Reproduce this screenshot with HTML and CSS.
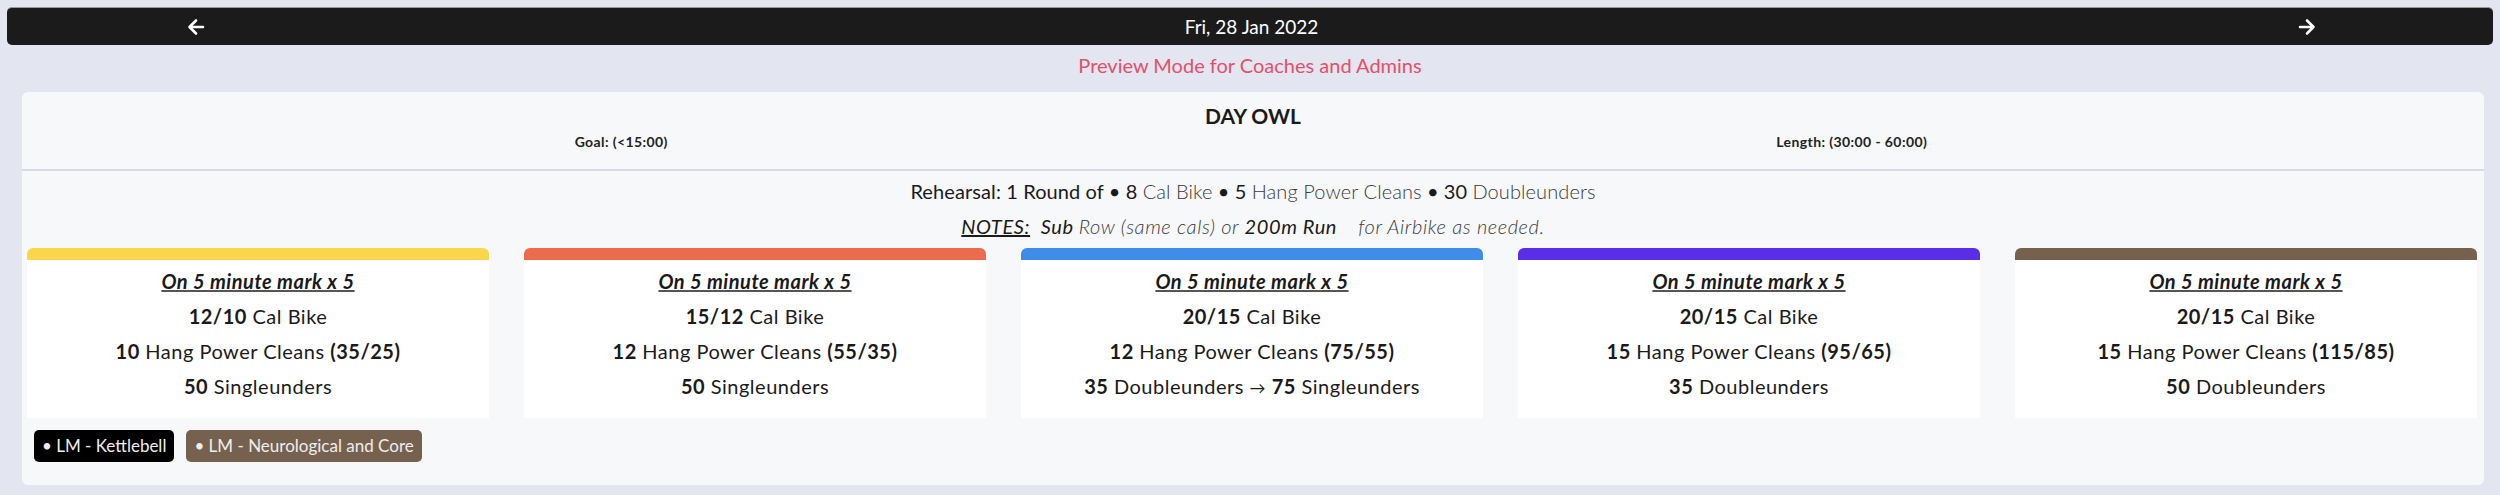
FILE: index.html
```html
<!DOCTYPE html>
<html lang="en">
<head>
<meta charset="utf-8">
<title>Day Owl</title>
<link rel="stylesheet" href="styles.css">
</head>
<body>
<div class="datebar">
  <span class="nav"><svg width="18" height="18" viewBox="0 0 18 18"><path d="M16 9H3M9 2.5L2.5 9 9 15.5" fill="none" stroke="#fff" stroke-width="2.6" stroke-linecap="round" stroke-linejoin="round"/></svg></span>
  <span class="date">Fri, 28 Jan 2022</span>
  <span class="nav"><svg width="18" height="18" viewBox="0 0 18 18"><path d="M2 9h13M9 2.5L15.5 9 9 15.5" fill="none" stroke="#fff" stroke-width="2.6" stroke-linecap="round" stroke-linejoin="round"/></svg></span>
</div>
<div class="preview">Preview Mode for Coaches and Admins</div>
<div class="panel">
  <div class="head">
    <div class="title">DAY OWL</div>
    <div class="meta"><div>Goal: (&lt;15:00)</div><div>Length: (30:00 - 60:00)</div></div>
  </div>
  <div class="body">
    <p class="rehearsal">Rehearsal: 1 Round of • 8 <span class="lt">Cal Bike</span> • 5 <span class="lt">Hang Power Cleans</span> • 30 <span class="lt">Doubleunders</span></p>
    <p class="notes"><span class="ul">NOTES:</span>&nbsp; Sub <span class="lt">Row (same cals) or</span> 200m Run&nbsp;&nbsp;&nbsp; <span class="lt">for Airbike as needed.</span></p>
    <div class="cards">
      <div class="card yellow">
        <p class="ct">On 5 minute mark x 5</p>
        <p><b>12/10</b> Cal Bike</p>
        <p><b>10</b> Hang Power Cleans <b>(35/25)</b></p>
        <p><b>50</b> Singleunders</p>
      </div>
      <div class="card orange">
        <p class="ct">On 5 minute mark x 5</p>
        <p><b>15/12</b> Cal Bike</p>
        <p><b>12</b> Hang Power Cleans <b>(55/35)</b></p>
        <p><b>50</b> Singleunders</p>
      </div>
      <div class="card blue">
        <p class="ct">On 5 minute mark x 5</p>
        <p><b>20/15</b> Cal Bike</p>
        <p><b>12</b> Hang Power Cleans <b>(75/55)</b></p>
        <p><b>35</b> Doubleunders <span class="arr">&#8594;</span> <b>75</b> Singleunders</p>
      </div>
      <div class="card purple">
        <p class="ct">On 5 minute mark x 5</p>
        <p><b>20/15</b> Cal Bike</p>
        <p><b>15</b> Hang Power Cleans <b>(95/65)</b></p>
        <p><b>35</b> Doubleunders</p>
      </div>
      <div class="card brown">
        <p class="ct">On 5 minute mark x 5</p>
        <p><b>20/15</b> Cal Bike</p>
        <p><b>15</b> Hang Power Cleans <b>(115/85)</b></p>
        <p><b>50</b> Doubleunders</p>
      </div>
    </div>
    <div class="tags">
      <span class="tag tag-black">• LM - Kettlebell</span>
      <span class="tag tag-brown">• LM - Neurological and Core</span>
    </div>
  </div>
</div>
</body>
</html>
```
FILE: styles.css
```css
html, body {
  margin: 0;
  padding: 0;
}
body {
  background: #e3e5f0;
  padding: 7px 7px 0 7px;
  font-family: Lato, "Noto Sans", sans-serif;
  color: #1a1a1a;
}
.datebar {
  height: 38px;
  box-sizing: border-box;
  background: #1b1b1b;
  border-top: 1px solid #9a9a9a;
  border-radius: 5px;
  display: flex;
  align-items: center;
  justify-content: space-between;
  padding: 0 177px 0 180px;
}
.nav {
  display: flex;
  width: 18px;
  height: 18px;
}
.date {
  color: #ffffff;
  font-size: 19px;
  line-height: 36px;
}
.preview {
  text-align: center;
  color: #e2506a;
  font-size: 20px;
  line-height: 28px;
  padding-top: 6px;
}
.panel {
  margin: 13px 9px 0 15px;
  background: #f7f8fa;
  border-radius: 6px;
  padding-bottom: 23px;
}
.head {
  padding: 12px 0 19px;
  border-bottom: 2px solid #d7d8e8;
  text-align: center;
}
.title {
  font-weight: 700;
  font-size: 21px;
  line-height: 24px;
}
.meta {
  display: grid;
  grid-template-columns: 1fr 1fr;
  margin: 6px 17px 0 -16px;
  font-size: 14px;
  letter-spacing: 0.4px;
  font-weight: 700;
  line-height: 16px;
  color: #222;
}
.body p {
  margin: 0;
}
.rehearsal,
.notes {
  text-align: center;
  font-size: 20px;
  line-height: 28px;
  color: #1a1a1a;
}
.rehearsal {
  margin-top: 6px !important;
  letter-spacing: 0.1px;
}
.notes {
  margin-top: 7px !important;
  font-style: italic;
  letter-spacing: 0.6px;
}
.lt {
  font-weight: 300;
  color: #3a3a3a;
}
.ul {
  text-decoration: underline;
  font-weight: 400;
}
.cards {
  display: grid;
  grid-template-columns: repeat(5, 1fr);
  column-gap: 35px;
  padding: 0 7px 0 5px;
  margin-top: 8px;
}
.card {
  background: #ffffff;
  border-top: 12px solid #f9d64a;
  border-radius: 6px 6px 0 0;
  padding: 4px 0 13px;
  text-align: center;
  font-size: 20px;
  line-height: 35px;
  letter-spacing: 0.5px;
}
.card b {
  font-weight: 700;
}
.card .ct {
  font-weight: 700;
  font-style: italic;
  text-decoration: underline;
  text-decoration-color: #555;
}
.card.yellow { border-top-color: #f9d64a; }
.card.orange { border-top-color: #ec6b4f; }
.card.blue { border-top-color: #3f8de9; }
.card.purple { border-top-color: #5a2ee6; }
.card.brown { border-top-color: #76614f; }
.arr {
  font-size: 16px;
}
.tags {
  display: flex;
  gap: 12px;
  padding-left: 12px;
  margin-top: 12px;
}
.tag {
  height: 32px;
  line-height: 32px;
  padding: 0 8px;
  border-radius: 5px;
  color: #eeeeee;
  font-size: 17px;
}
.tag-black { background: #000000; }
.tag-brown { background: #76614f; }
```
